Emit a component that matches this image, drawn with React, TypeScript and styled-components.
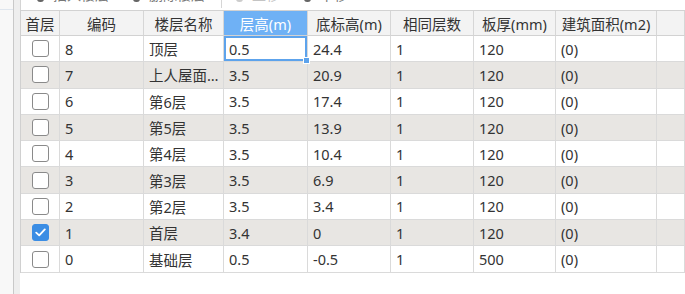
import React from 'react';
import styled, { createGlobalStyle } from 'styled-components';

const Global = createGlobalStyle`
  html, body {
    margin: 0;
    padding: 0;
    background: #ffffff;
  }
  body {
    font-family: "Noto Sans", "Noto Sans CJK SC", sans-serif;
    font-size: 14.5px;
    color: #333;
  }
`;

const Page = styled.div`
  display: flex;
  width: 685px;
  height: 294px;
  overflow: hidden;
  background: #fff;
`;

const SideRail = styled.div`
  display: flex;
  flex-shrink: 0;
  height: 100%;
`;

const RailOuter = styled.div`
  width: 13px;
  background: #f8f8f8;
  border-top: 9px solid #f8f8f8;
  position: relative;
  &::before {
    content: '';
    position: absolute;
    left: 0;
    right: 0;
    top: 0;
    height: 1px;
    background: #dfe6ee;
  }
`;

const RailInner = styled.div`
  width: 6px;
  border-left: 1px solid #c9c9c9;
  background: #eeeeee;
`;

const Main = styled.div`
  flex: 1;
  display: flex;
  flex-direction: column;
  min-width: 0;
`;

// only the lower edge of the toolbar is visible in the shot
const Toolbar = styled.div`
  height: 10px;
  flex-shrink: 0;
  overflow: hidden;
  display: flex;
  align-items: flex-end;
  padding-left: 16px;
  border-left: 1px solid #d4d4d4;
`;

const ToolItem = styled.div<{ $muted?: boolean }>`
  display: flex;
  align-items: center;
  gap: 9px;
  margin-right: 24px;
  margin-bottom: 5px;
  color: ${p => (p.$muted ? '#c4c4c4' : '#777')};
  font-size: 14px;
  line-height: 20px;
`;

const ToolIcon = styled.span<{ $muted?: boolean }>`
  display: inline-block;
  width: 7px;
  height: 14px;
  border-radius: 3px;
  background: ${p => (p.$muted ? '#cccccc' : '#666')};
`;

const ToolSep = styled.span`
  align-self: stretch;
  width: 1px;
  margin: 0 14px 2px -8px;
  background: #d6d6d6;
`;

const COLS = '39px 84px 80px 84px 83px 83px 82px 101px 1fr';

const Grid = styled.div`
  display: grid;
  grid-template-columns: ${COLS};
  border-left: 1px solid #d0d0d0;
  border-top: 1px solid #d2d2d2;
`;

const HeadCell = styled.div<{ $active?: boolean }>`
  height: 24px;
  display: flex;
  align-items: center;
  justify-content: center;
  white-space: nowrap;
  overflow: hidden;
  background: ${p => (p.$active ? '#6fb1f5' : '#f3f3f3')};
  color: ${p => (p.$active ? '#fff' : '#333')};
  border-right: 1px solid #d6d6d6;
  border-bottom: 1px solid #d2d2d2;
`;

const Cell = styled.div<{ $shade?: boolean; $center?: boolean; $selected?: boolean }>`
  position: relative;
  height: 25.3px;
  display: flex;
  align-items: center;
  justify-content: ${p => (p.$center ? 'center' : 'flex-start')};
  padding: ${p => (p.$center ? '0' : '0 3px 0 5px')};
  white-space: nowrap;
  background: ${p => (p.$shade ? '#e8e6e3' : '#fff')};
  border-right: 1px solid #dadada;
  border-bottom: 1px solid #dadada;
  box-shadow: ${p => (p.$selected ? 'inset 0 0 0 2px #5da3ec' : 'none')};
  overflow: ${p => (p.$selected ? 'visible' : 'hidden')};
`;

const CellText = styled.span`
  overflow: hidden;
  text-overflow: ellipsis;
  white-space: nowrap;
  min-width: 0;
`;

const FillHandle = styled.span`
  position: absolute;
  right: -3px;
  bottom: -3px;
  width: 5px;
  height: 5px;
  background: #5da3ec;
  border: 1px solid #fff;
  z-index: 2;
`;

const Box = styled.span<{ $checked?: boolean }>`
  display: inline-flex;
  align-items: center;
  justify-content: center;
  box-sizing: border-box;
  width: 17px;
  height: 17px;
  border-radius: 3px;
  border: 1px solid ${p => (p.$checked ? '#3b8de4' : '#8a8a8a')};
  background: ${p => (p.$checked ? '#3b8de4' : '#fff')};
`;

const headers = ['首层', '编码', '楼层名称', '层高(m)', '底标高(m)', '相同层数', '板厚(mm)', '建筑面积(m2)', ''];

const rows = [
  { code: '8', name: '顶层', h: '0.5', base: '24.4', n: '1', t: '120', area: '(0)' },
  { code: '7', name: '上人屋面层', h: '3.5', base: '20.9', n: '1', t: '120', area: '(0)' },
  { code: '6', name: '第6层', h: '3.5', base: '17.4', n: '1', t: '120', area: '(0)' },
  { code: '5', name: '第5层', h: '3.5', base: '13.9', n: '1', t: '120', area: '(0)' },
  { code: '4', name: '第4层', h: '3.5', base: '10.4', n: '1', t: '120', area: '(0)' },
  { code: '3', name: '第3层', h: '3.5', base: '6.9', n: '1', t: '120', area: '(0)' },
  { code: '2', name: '第2层', h: '3.5', base: '3.4', n: '1', t: '120', area: '(0)' },
  { code: '1', name: '首层', h: '3.4', base: '0', n: '1', t: '120', area: '(0)', first: true },
  { code: '0', name: '基础层', h: '0.5', base: '-0.5', n: '1', t: '500', area: '(0)' },
];

function Check({ checked }: { checked?: boolean }) {
  return (
    <Box $checked={checked}>
      {checked && (
        <svg width="11" height="9" viewBox="0 0 11 9">
          <path d="M1.2 4.6 L4.2 7.4 L9.8 1.4" fill="none" stroke="#fff" strokeWidth="1.8" strokeLinecap="round" strokeLinejoin="round" />
        </svg>
      )}
    </Box>
  );
}

export default function App() {
  return (
    <Page>
      <Global />
      <SideRail>
        <RailOuter />
        <RailInner />
      </SideRail>
      <Main>
        <Toolbar>
          <ToolItem>
            <ToolIcon />
            插入楼层
          </ToolItem>
          <ToolItem>
            <ToolIcon />
            删除楼层
          </ToolItem>
          <ToolSep />
          <ToolItem $muted>
            <ToolIcon $muted />
            上移
          </ToolItem>
          <ToolItem>
            <ToolIcon />
            下移
          </ToolItem>
        </Toolbar>
        <Grid>
          {headers.map((h, i) => (
            <HeadCell key={i} $active={i === 3}>
              {h}
            </HeadCell>
          ))}
          {rows.map((r, i) => {
            const shade = i % 2 === 1;
            return (
              <React.Fragment key={r.code}>
                <Cell $shade={shade} $center>
                  <Check checked={r.first} />
                </Cell>
                <Cell $shade={shade}>{r.code}</Cell>
                <Cell $shade={shade}>
                  <CellText>{r.name}</CellText>
                </Cell>
                <Cell $shade={shade} $selected={i === 0}>
                  {r.h}
                  {i === 0 && <FillHandle />}
                </Cell>
                <Cell $shade={shade}>{r.base}</Cell>
                <Cell $shade={shade}>{r.n}</Cell>
                <Cell $shade={shade}>{r.t}</Cell>
                <Cell $shade={shade}>{r.area}</Cell>
                <Cell $shade={shade} />
              </React.Fragment>
            );
          })}
        </Grid>
      </Main>
    </Page>
  );
}
